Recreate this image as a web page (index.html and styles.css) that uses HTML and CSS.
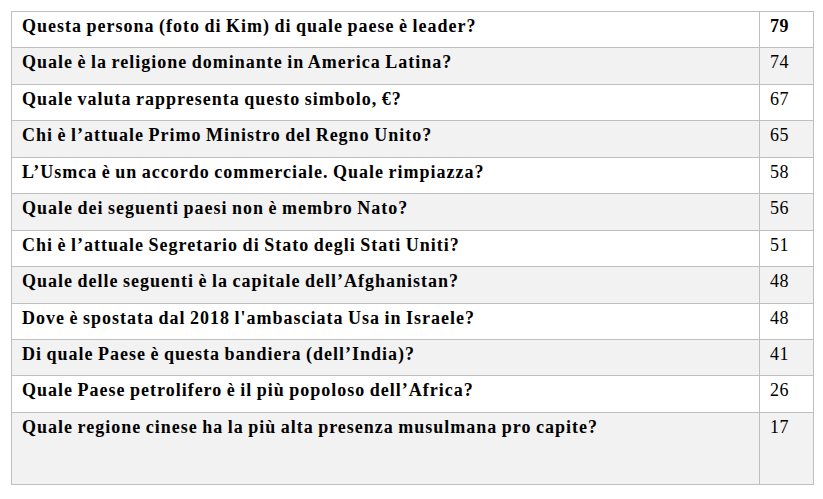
FILE: index.html
```html
<!DOCTYPE html>
<html lang="it">
<head>
  <meta charset="UTF-8" />
  <title>Domande</title>
  <link rel="stylesheet" href="styles.css">
</head>
<body>
  <table class="quiz-table">
    <tr><td class="q">Questa persona (foto di Kim) di quale paese è leader?</td><td class="n top">79</td></tr>
    <tr class="alt"><td class="q">Quale è la religione dominante in America Latina?</td><td class="n">74</td></tr>
    <tr><td class="q">Quale valuta rappresenta questo simbolo, €?</td><td class="n">67</td></tr>
    <tr class="alt"><td class="q">Chi è l’attuale Primo Ministro del Regno Unito?</td><td class="n">65</td></tr>
    <tr><td class="q">L’Usmca è un accordo commerciale. Quale rimpiazza?</td><td class="n">58</td></tr>
    <tr class="alt"><td class="q">Quale dei seguenti paesi non è membro Nato?</td><td class="n">56</td></tr>
    <tr><td class="q">Chi è l’attuale Segretario di Stato degli Stati Uniti?</td><td class="n">51</td></tr>
    <tr class="alt"><td class="q">Quale delle seguenti è la capitale dell’Afghanistan?</td><td class="n">48</td></tr>
    <tr><td class="q">Dove è spostata dal 2018 l'ambasciata Usa in Israele?</td><td class="n">48</td></tr>
    <tr class="alt"><td class="q">Di quale Paese è questa bandiera (dell’India)?</td><td class="n">41</td></tr>
    <tr><td class="q">Quale Paese petrolifero è il più popoloso dell’Africa?</td><td class="n">26</td></tr>
    <tr class="alt last"><td class="q">Quale regione cinese ha la più alta presenza musulmana pro capite?</td><td class="n">17</td></tr>
  </table>
</body>
</html>
```

FILE: styles.css
```css
body {
  margin: 0;
  padding: 11px 0 0 11px;
  background-color: #fff;
  font-family: 'Liberation Serif', 'Times New Roman', serif;
  color: #000;
}
.quiz-table {
  border-collapse: collapse;
  width: 803px;
  font-size: 18px;
}
.quiz-table td {
  border: 1px solid #bfbfbf;
  vertical-align: top;
  height: 36.45px;
  box-sizing: border-box;
  padding: 3px 10px 0 10px;
  line-height: 22px;
}
.quiz-table .q { font-weight: bold; letter-spacing: 1px; word-spacing: -1px; }
.quiz-table .n { width: 54px; letter-spacing: 0.5px; }
.quiz-table .top { font-weight: bold; }
.quiz-table .alt td { background-color: #f2f2f2; }
.quiz-table .last td { height: 72px; }
```
